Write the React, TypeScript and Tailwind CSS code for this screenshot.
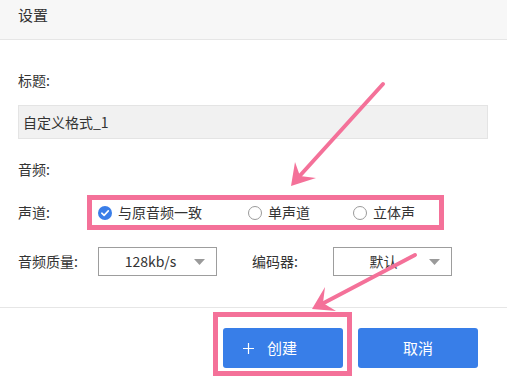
import React from "react";

const PINK = "#f47199";

const Radio = ({ checked }: { checked?: boolean }) =>
  checked ? (
    <svg width="14" height="14" viewBox="0 0 14 14" className="shrink-0">
      <circle cx="7" cy="7" r="7" fill="#3a7ee8" />
      <path d="M3.8 7.2 L6.1 9.4 L10.3 4.9" fill="none" stroke="#fff" strokeWidth="1.6" strokeLinecap="round" strokeLinejoin="round" />
    </svg>
  ) : (
    <span className="shrink-0 w-[14px] h-[14px] rounded-full border border-[#9a9a9a] bg-white" />
  );

const Select = ({ value, pad }: { value: string; pad: string }) => (
  <div className="w-[119px] h-[29px] border border-[#9d9d9d] flex items-center pr-[11px]">
    <span className={`flex-1 text-center ${pad}`}>{value}</span>
    <svg width="11" height="6" viewBox="0 0 11 6">
      <path d="M0 0 H11 L5.5 6 Z" fill="#9a9a9a" />
    </svg>
  </div>
);

export default function App() {
  const options = [
    { label: "与原音频一致", checked: true, w: "w-[150px]" },
    { label: "单声道", checked: false, w: "w-[105px]" },
    { label: "立体声", checked: false, w: "" },
  ];

  return (
    <div className="relative w-[507px] h-[379px] overflow-hidden bg-white text-[#333] text-[14px] font-['Noto_Sans_CJK_SC','Microsoft_YaHei',sans-serif]">
      {/* header */}
      <div className="h-[40px] bg-[#f7f7f7] border-b border-[#e6e6e6] px-[18px] pt-[4px] text-[15px] leading-[22px]">
        设置
      </div>

      <div className="pl-[18px] pr-[19px]">
        <div className="mt-[30px] leading-[20px]">标题:</div>
        <div className="mt-[15px] h-[34px] bg-[#f1f1f1] border border-[#e4e4e4] flex items-center pl-[4px]">
          自定义格式_1
        </div>

        <div className="mt-[20px] leading-[20px]">音频:</div>

        <div className="mt-[16px] flex items-center">
          <span className="w-[69px]">声道:</span>
          <div className="w-[357px] h-[35px] border-[5px] flex items-center pl-[6px]" style={{ borderColor: PINK }}>
            {options.map((o) => (
              <label key={o.label} className={`flex items-center gap-[6px] ${o.w}`}>
                <Radio checked={o.checked} />
                <span>{o.label}</span>
              </label>
            ))}
          </div>
        </div>

        <div className="mt-[17px] flex items-center">
          <span className="w-[80px]">音频质量:</span>
          <Select value="128kb/s" pad="pl-[8px]" />
          <span className="ml-[35px] w-[81px]">编码器:</span>
          <Select value="默认" pad="pl-[4px]" />
        </div>
      </div>

      {/* footer */}
      <div className="mt-[31px] border-t border-[#e6e6e6] flex justify-end gap-[15px] pt-[20px] pr-[29px]">
        <div className="relative">
          <button className="w-[120px] h-[40px] rounded-[3px] bg-[#387ee8] text-white text-[15px] flex items-center pl-[20px] gap-[13px]">
            <svg width="11" height="11" viewBox="0 0 11 11">
              <path d="M5.5 0 V11 M0 5.5 H11" stroke="#fff" strokeWidth="1.2" />
            </svg>
            创建
          </button>
          <div
            className="absolute -left-[10px] -top-[16px] -right-[9px] -bottom-[8px] border-[5px] pointer-events-none"
            style={{ borderColor: PINK }}
          />
        </div>
        <button className="w-[120px] h-[40px] rounded-[3px] bg-[#387ee8] text-white text-[15px]">取消</button>
      </div>

      {/* annotation arrows */}
      <svg className="absolute inset-0 pointer-events-none" width="507" height="379">
        <line x1="383" y1="84" x2="296" y2="180" stroke={PINK} strokeWidth="4" strokeLinecap="round" />
        <path d="M291 186 L295 162 L300 176 L316 178 Z" fill={PINK} />
        <line x1="415" y1="255" x2="318" y2="306" stroke={PINK} strokeWidth="4" strokeLinecap="round" />
        <path d="M312 309 L325 287 L323 303 L336 311 Z" fill={PINK} />
      </svg>
    </div>
  );
}
